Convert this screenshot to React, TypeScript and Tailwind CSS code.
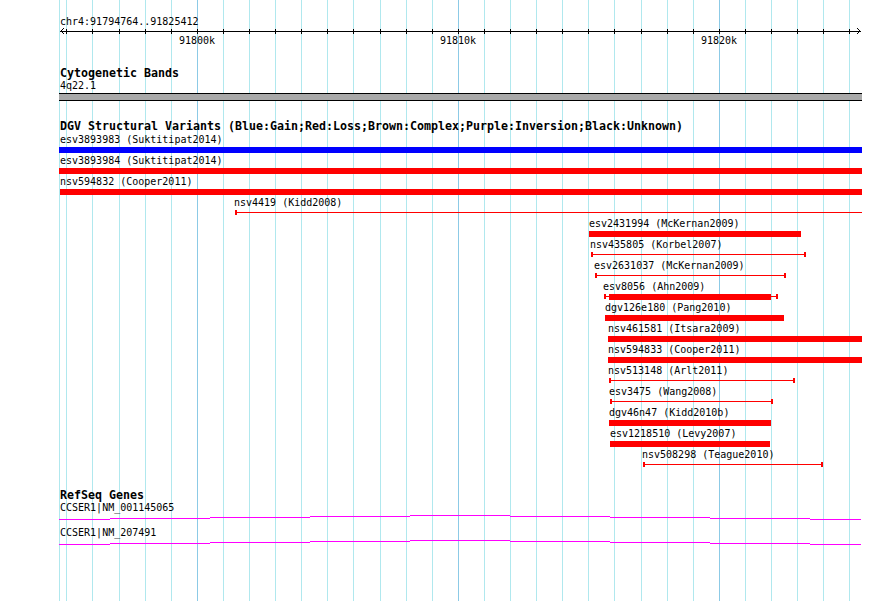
const MAJOR = [197, 458, 719];
const GRID_X = Array.from({ length: 31 }, (_, k) => Math.round(196.8 + 26.1 * (k - 5)));

type Feature = {
  label: string;
  labelX: number;
  kind: 'box' | 'span' | 'both';
  start: number;
  end: number;
  color?: string;
  inner?: [number, number];
  openRight?: boolean;
};

const variants: Feature[] = [
  { label: 'esv3893983 (Suktitipat2014)', labelX: 60, kind: 'box', start: 59, end: 862, color: '#0000ff' },
  { label: 'esv3893984 (Suktitipat2014)', labelX: 60, kind: 'box', start: 59, end: 862 },
  { label: 'nsv594832 (Cooper2011)', labelX: 60, kind: 'box', start: 60, end: 862 },
  { label: 'nsv4419 (Kidd2008)', labelX: 234, kind: 'span', start: 235, end: 862, openRight: true },
  { label: 'esv2431994 (McKernan2009)', labelX: 589, kind: 'box', start: 589, end: 801 },
  { label: 'nsv435805 (Korbel2007)', labelX: 590, kind: 'span', start: 591, end: 806 },
  { label: 'esv2631037 (McKernan2009)', labelX: 594, kind: 'span', start: 595, end: 786 },
  { label: 'esv8056 (Ahn2009)', labelX: 603, kind: 'both', start: 604, end: 778, inner: [609, 771] },
  { label: 'dgv126e180 (Pang2010)', labelX: 605, kind: 'box', start: 605, end: 784 },
  { label: 'nsv461581 (Itsara2009)', labelX: 608, kind: 'box', start: 608, end: 862 },
  { label: 'nsv594833 (Cooper2011)', labelX: 608, kind: 'box', start: 608, end: 862 },
  { label: 'nsv513148 (Arlt2011)', labelX: 608, kind: 'span', start: 609, end: 795 },
  { label: 'esv3475 (Wang2008)', labelX: 609, kind: 'span', start: 610, end: 773 },
  { label: 'dgv46n47 (Kidd2010b)', labelX: 609, kind: 'box', start: 609, end: 771 },
  { label: 'esv1218510 (Levy2007)', labelX: 610, kind: 'box', start: 610, end: 770 },
  { label: 'nsv508298 (Teague2010)', labelX: 642, kind: 'span', start: 643, end: 823 },
];

const genes = ['CCSER1|NM_001145065', 'CCSER1|NM_207491'];

// intron hat, drawn as pixel steps: [from, to, rise]
const hatSteps: [number, number, number][] = [
  [59, 110, 0],
  [110, 210, 1],
  [210, 310, 2],
  [310, 410, 3],
  [410, 510, 4],
  [510, 610, 3],
  [610, 710, 2],
  [710, 810, 1],
  [810, 861, 0],
];

const GridLines = () => (
  <svg className="pointer-events-none absolute left-0 top-0" width="890" height="601" shapeRendering="crispEdges">
    <rect x={59} y={0} width={1} height={601} fill="#b0e8ee" />
    {GRID_X.map((x) => (
      <rect key={x} x={x} y={0} width={1} height={601} fill={MAJOR.includes(x) ? '#8ccae6' : '#b0e8ee'} />
    ))}
  </svg>
);

const Ruler = () => (
  <div className="flex flex-col pt-[16px]">
    <div className="h-[12px] pl-[60px] leading-[12px]">chr4:91794764..91825412</div>
    <svg width="890" height="7" className="block" shapeRendering="crispEdges">
      <rect x={60} y={3} width={801} height={1} fill="#000" />
      {GRID_X.map((x) => (
        <rect key={x} x={x} y={1} width={1} height={5} fill="#000" />
      ))}
      <polyline points="64,0 61,3 64,6" fill="none" stroke="#000" strokeWidth={1} />
      <polyline points="857,0 860,3 857,6" fill="none" stroke="#000" strokeWidth={1} />
    </svg>
    <div className="relative h-[12px] leading-[12px]">
      {['91800k', '91810k', '91820k'].map((t, i) => (
        <span key={t} className="absolute top-0 -translate-x-1/2" style={{ left: MAJOR[i] }}>
          {t}
        </span>
      ))}
    </div>
  </div>
);

const TrackTitle = ({ children, className }: { children: React.ReactNode; className: string }) => (
  <div className={`h-[13px] pl-[60px] text-[11.63px] font-bold leading-[13px] ${className}`}>{children}</div>
);

const FeatureRow = ({ f }: { f: Feature }) => {
  const color = f.color ?? '#ff0000';
  const [bx, ex] = f.inner ?? [f.start, f.end];
  return (
    <div className="flex h-[21px] flex-col">
      <div className="h-[13px] whitespace-pre leading-[12px]" style={{ paddingLeft: f.labelX }}>
        {f.label}
      </div>
      <div className="relative h-[6px]">
        {f.kind !== 'span' && (
          <div className="absolute inset-y-0" style={{ left: bx, width: ex - bx, background: color }} />
        )}
        {f.kind !== 'box' && (
          <>
            <div className="absolute top-[2px] h-px" style={{ left: f.start, width: f.end - f.start, background: color }} />
            <div className="absolute top-0 h-[5px] w-[2px]" style={{ left: f.start, background: color }} />
            {!f.openRight && (
              <div className="absolute top-0 h-[5px] w-[2px]" style={{ left: f.end - 2, background: color }} />
            )}
          </>
        )}
      </div>
    </div>
  );
};

const GeneRow = ({ name }: { name: string }) => (
  <div className="flex h-[25px] flex-col">
    <div className="h-[13px] pl-[60px] leading-[12px]">{name}</div>
    <svg className="block" width="890" height="5" shapeRendering="crispEdges">
      {hatSteps.map(([a, b, r]) => (
        <rect key={a} x={a} y={4 - r} width={b - a} height={1} fill="#ff00ff" />
      ))}
    </svg>
  </div>
);

export default function App() {
  return (
    <div className="relative h-[601px] w-[890px] overflow-hidden bg-white font-['DejaVu_Sans_Mono','Liberation_Mono',monospace] text-[10px] text-black">
      <GridLines />
      <div className="relative flex flex-col">
        <Ruler />

        <section className="mt-[20px] flex flex-col">
          <TrackTitle className="">Cytogenetic Bands</TrackTitle>
          <div className="h-[12px] pl-[60px] leading-[12px]">4q22.1</div>
          <div className="ml-[59px] mt-px h-[8px] w-[803px] border-y border-black bg-[#a9a9a9]" />
        </section>

        <section className="mt-[19px] flex flex-col gap-px">
          <TrackTitle className="">
            DGV Structural Variants (Blue:Gain;Red:Loss;Brown:Complex;Purple:Inversion;Black:Unknown)
          </TrackTitle>
          <div className="flex flex-col">
            {variants.map((f) => (
              <FeatureRow key={f.label} f={f} />
            ))}
          </div>
        </section>

        <section className="mt-[19px] flex flex-col">
          <TrackTitle className="">RefSeq Genes</TrackTitle>
          {genes.map((g) => (
            <GeneRow key={g} name={g} />
          ))}
        </section>
      </div>
    </div>
  );
}
